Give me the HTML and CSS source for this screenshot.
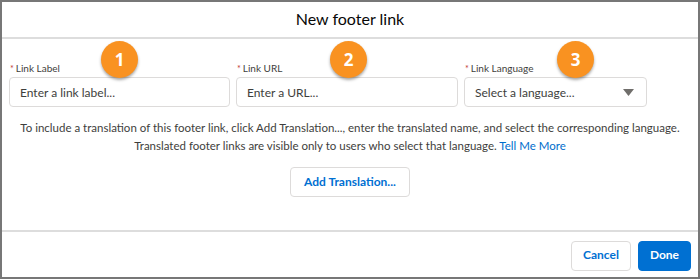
FILE: index.html
```html
<!doctype html>
<html lang="en">
<head>
	<meta charset="UTF-8">
	<title>New footer link</title>
	<link rel="stylesheet" href="styles.css">
</head>
<body>
	<div class="modal">
		<div class="modal-header">
			<h2 class="modal-title">New footer link</h2>
		</div>
		<div class="modal-body">
			<div class="fields">
				<div class="field">
					<label class="field-label"><abbr class="required">*</abbr>Link Label</label>
					<input class="field-input" placeholder="Enter a link label...">
					<span class="step step-1">1</span>
				</div>
				<div class="field">
					<label class="field-label"><abbr class="required">*</abbr>Link URL</label>
					<input class="field-input" placeholder="Enter a URL...">
					<span class="step step-2">2</span>
				</div>
				<div class="field">
					<label class="field-label"><abbr class="required">*</abbr>Link Language</label>
					<div class="field-select">
						<span>Select a language...</span>
						<svg class="select-arrow" width="11" height="7" viewBox="0 0 11 7"><path d="M0 0h11L5.5 7z" fill="#706e6b"/></svg>
					</div>
					<span class="step step-3">3</span>
				</div>
			</div>
			<p class="help-text">
				To include a translation of this footer link, click Add Translation..., enter the translated name, and select the corresponding language.<br>
				Translated footer links are visible only to users who select that language. <a href="#" class="help-link">Tell Me More</a>
			</p>
			<div class="add-row">
				<a href="javascript:;" class="btn btn-neutral btn-add">Add Translation...</a>
			</div>
		</div>
		<div class="modal-footer">
			<a href="javascript:;" class="btn btn-neutral">Cancel</a>
			<a href="javascript:;" class="btn btn-brand">Done</a>
		</div>
	</div>
</body>
</html>
```

FILE: styles.css
```css
body {
	margin: 0;
	padding: 0;
	font: 12px/1.4 "Lato", "Liberation Sans", sans-serif;
	color: #3e3e3c;
}
/* 外框 */
.modal {
	width: 700px;
	height: 279px;
	box-sizing: border-box;
	border: 2px solid #777;
	background: #fff;
	display: flex;
	flex-direction: column;
}
.modal-header {
	height: 35px;
	border-bottom: 2px solid #ddd;
	display: flex;
	align-items: center;
	justify-content: center;
}
.modal-title {
	margin: 0;
	font-size: 16px;
	font-weight: normal;
	color: #080707;
}
.modal-body {
	flex: 1;
	padding: 0 7px;
}
/* 三个输入项 */
.fields {
	display: grid;
	grid-template-columns: 221px 222px 183px;
	column-gap: 6px;
	padding-top: 23px;
}
.field {
	position: relative;
}
.field-label {
	display: block;
	font-size: 10px;
	line-height: 13px;
	margin-bottom: 2px;
	padding-left: 1px;
	color: #3e3e3c;
}
.required {
	color: #c23934;
	text-decoration: none;
	margin-right: 2px;
	font-size: 9px;
}
.field-input,
.field-select {
	display: block;
	width: 100%;
	height: 30px;
	box-sizing: border-box;
	border: 1px solid #dddbda;
	border-radius: 4px;
	padding: 0 10px;
	font: 12px "Lato", "Liberation Sans", sans-serif;
	color: #3e3e3c;
	background: #fff;
}
.field-input::placeholder {
	color: #3e3e3c;
}
.field-select {
	display: flex;
	align-items: center;
	justify-content: space-between;
	padding-right: 12px;
}
/* 橙色序号 */
.step {
	position: absolute;
	top: -21px;
	width: 37px;
	height: 37px;
	border-radius: 50%;
	background: #f99221;
	box-shadow: 0 2px 3px rgba(0, 0, 0, 0.35);
	color: #fff;
	font: bold 17px/37px "Open Sans", "Liberation Sans", sans-serif;
	text-align: center;
}
.step-1 {
	left: 92px;
}
.step-2 {
	left: 94px;
}
.step-3 {
	left: 93px;
}
.help-text {
	margin: 12px 0 0;
	text-align: center;
	line-height: 18px;
	font-size: 11.5px;
	white-space: nowrap;
}
.help-link {
	color: #006dcc;
	text-decoration: none;
}
.add-row {
	display: flex;
	justify-content: center;
	margin-top: 12px;
}
.btn {
	display: inline-flex;
	align-items: center;
	height: 30px;
	box-sizing: border-box;
	padding: 0 11px;
	border: 1px solid #dddbda;
	border-radius: 4px;
	font-weight: bold;
	font-size: 12px;
	text-decoration: none;
}
.btn-add {
	padding: 0 13px;
}
.btn-neutral {
	background: #fff;
	color: #0070d2;
}
.btn-brand {
	background: #0070d2;
	border-color: #0070d2;
	color: #fff;
}
.modal-footer {
	height: 47px;
	border-top: 2px solid #ddd;
	display: flex;
	align-items: center;
	justify-content: flex-end;
	gap: 7px;
	padding-right: 7px;
	padding-top: 2px;
	box-sizing: border-box;
}
```
